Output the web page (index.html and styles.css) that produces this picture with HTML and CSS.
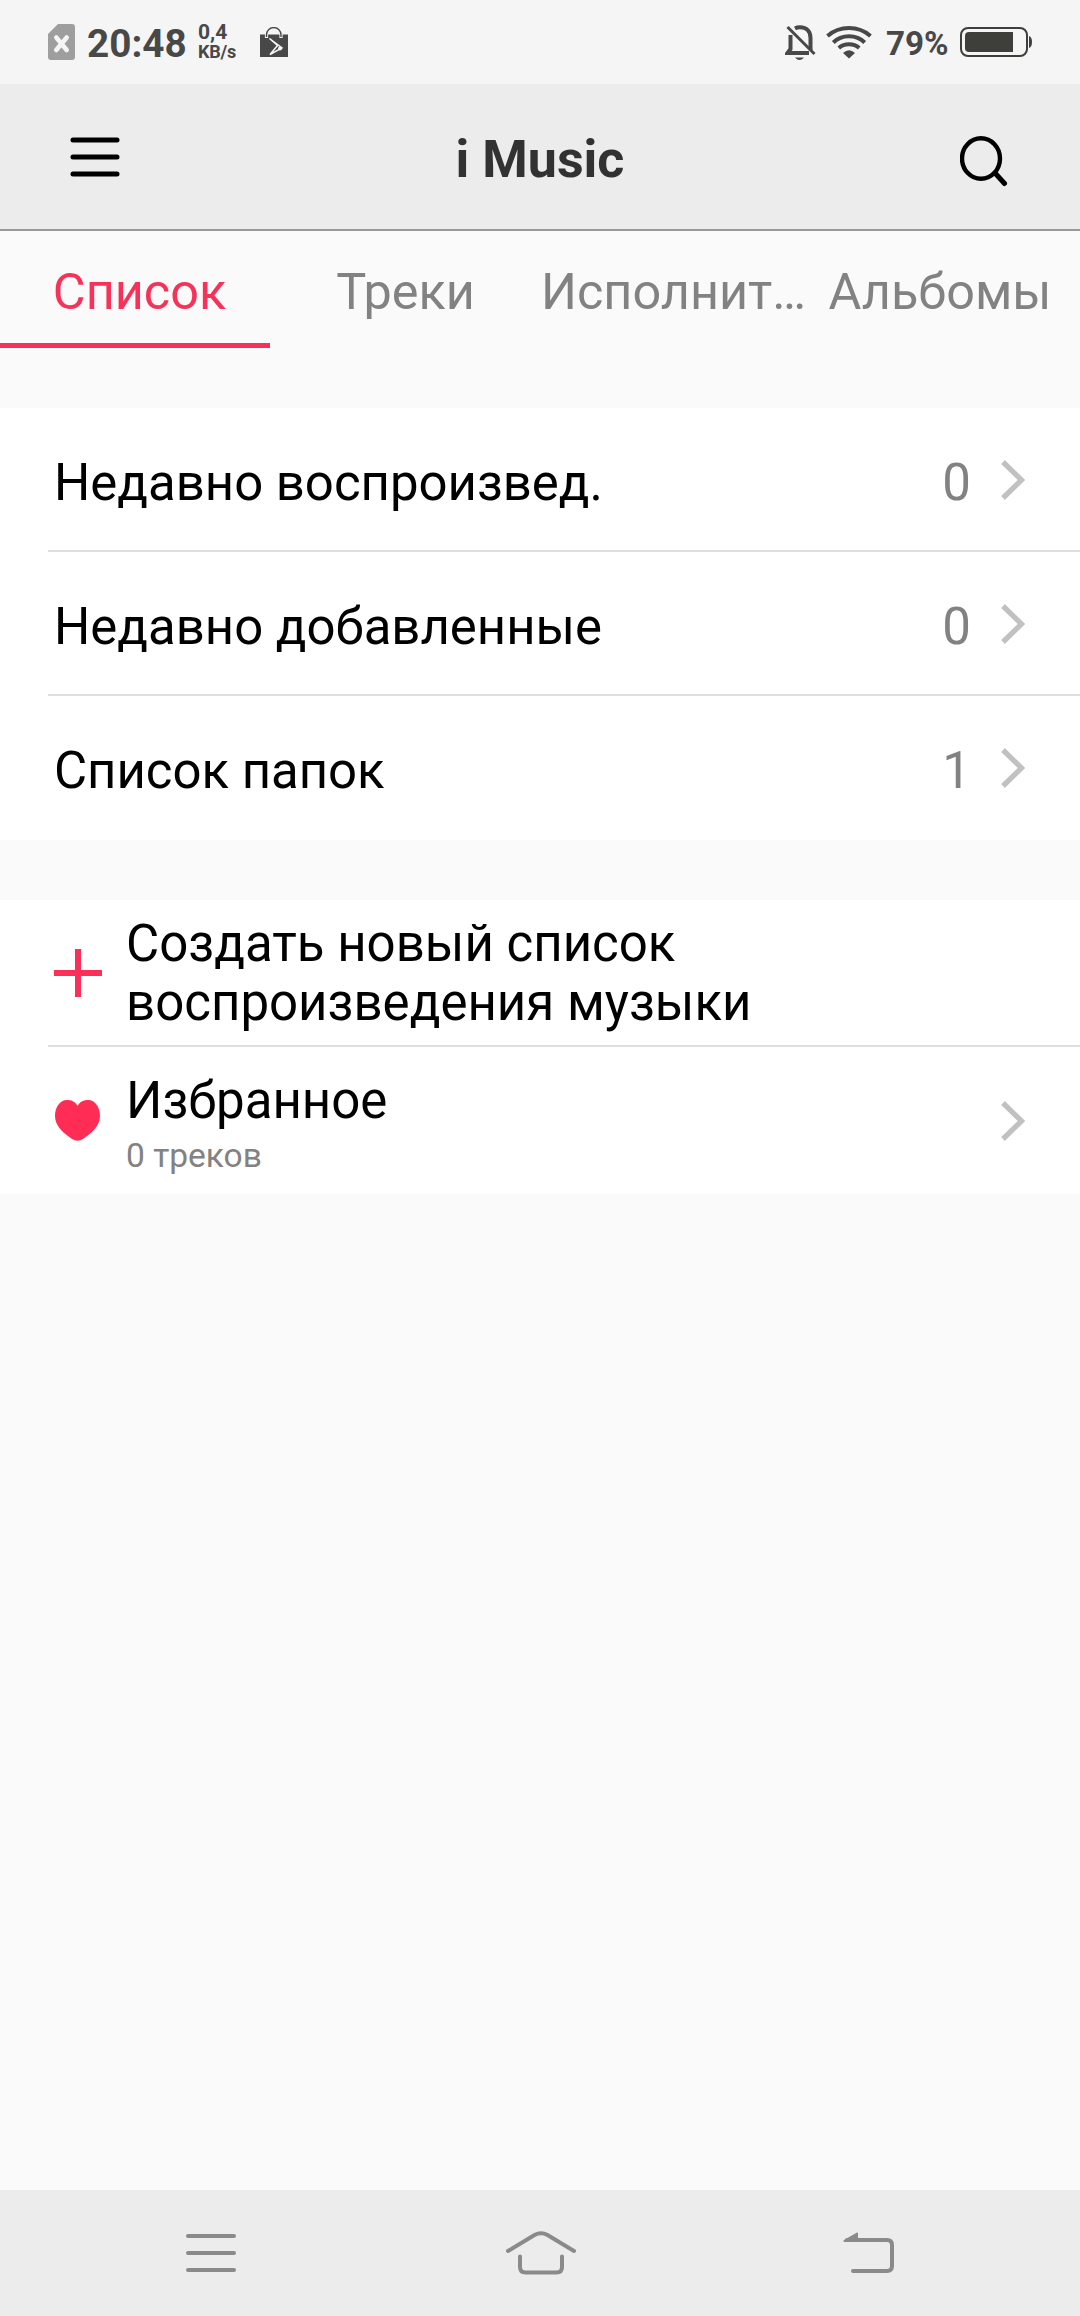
FILE: index.html
```html
<!DOCTYPE html>
<html lang="ru">
<head>
<meta charset="utf-8">
<title>i Music</title>
<link rel="stylesheet" href="styles.css">
</head>
<body>
<div class="screen">
  <div class="status">
    <svg class="sim" width="27" height="36" viewBox="0 0 27 36"><path d="M10 0H24Q27 0 27 3V33Q27 36 24 36H3Q0 36 0 33V10Z" fill="#9e9e9e"/><path d="M8.300 13.500L18.700 26M18.700 13.500L8.300 26" stroke="#f5f5f5" stroke-width="4.600" stroke-linecap="round"/></svg>
    <span class="clock">20:48</span>
    <span class="speed"><span class="rate">0,4</span><span class="unit">KB/s</span></span>
    <svg class="bag" width="28" height="30" viewBox="0 0 28 30"><path d="M0 7.500H28V30H0Z" fill="#484848"/><path d="M6.500 11V8C6.500 -2 21 -2 21 8V11" fill="none" stroke="#f5f5f5" stroke-width="3.200"/><path d="M6.500 10V8C6.500 -1.800 21 -1.800 21 8V10" fill="none" stroke="#484848" stroke-width="1.400"/><path d="M9.500 11.500L22 21L10 27.500L17.500 18.500Z" fill="none" stroke="#f5f5f5" stroke-width="1.500"/><circle cx="20" cy="21.500" r="2" fill="#f5f5f5"/></svg>
    <div class="status-right">
      <svg class="bell" width="31" height="36" viewBox="0 0 31 36"><g fill="none" stroke="#484848" stroke-width="4"><path d="M5.500 10V24L2.500 28H24"/><path d="M10 3.500Q12 2.300 15 2.300C22 2.300 25.500 7 25.500 13V25"/><path d="M2.500 2L29.500 29" stroke-width="3"/></g><path d="M10 32.500H19Q14.500 37.500 10 32.500Z" fill="#484848"/></svg>
      <svg class="wifi" width="46" height="33" viewBox="0 0 46 33"><g fill="none" stroke="#484848" stroke-width="4"><path d="M1.500 10Q10.500 2 23 2T44.500 10"/><path d="M7.300 16.500Q13.500 10.300 23 10.300T38.700 16.500"/><path d="M12.800 22Q17 18.300 23 18.300T33.200 22"/></g><path d="M17 27Q23 21.500 29 27L23 32.500Z" fill="#484848"/></svg>
      <span class="percent">79%</span>
      <svg class="battery" width="73" height="30" viewBox="0 0 73 30"><rect x="1" y="1" width="66" height="28" rx="7" fill="none" stroke="#3e3f3a" stroke-width="2"/><path d="M9 5H53V25H9Q5 25 5 21V9Q5 5 9 5Z" fill="#3e3f3a"/><path d="M69 9Q72 10 72 15T69 21Z" fill="#3e3f3a"/></svg>
    </div>
  </div>
  <div class="header">
    <svg class="menu" width="50" height="40" viewBox="0 0 50 40"><path d="M3 3H47M3 20H47M3 37H47" stroke="#000" stroke-width="5" stroke-linecap="round"/></svg>
    <h1 class="title">i Music</h1>
    <svg class="search" width="48" height="52" viewBox="0 0 48 52"><ellipse cx="21" cy="22.500" rx="19" ry="20.300" fill="none" stroke="#000" stroke-width="4.400"/><path d="M35 37L44.500 47.500" stroke="#000" stroke-width="5" stroke-linecap="round"/></svg>
  </div>
  <div class="tabs">
    <div class="tab active">Список</div>
    <div class="tab">Треки</div>
    <div class="tab tab-wide">Исполнит…</div>
    <div class="tab tab-last">Альбомы</div>
  </div>
  <div class="group">
    <div class="row"><span class="label">Недавно воспроизвед.</span><span class="count">0</span><svg class="chevron" width="24" height="40" viewBox="0 0 24 40"><path d="M2 2L20.500 20L2 38" fill="none" stroke="#c1c1c1" stroke-width="5.300"/></svg></div>
    <div class="row"><span class="label">Недавно добавленные</span><span class="count">0</span><svg class="chevron" width="24" height="40" viewBox="0 0 24 40"><path d="M2 2L20.500 20L2 38" fill="none" stroke="#c1c1c1" stroke-width="5.300"/></svg></div>
    <div class="row"><span class="label">Список папок</span><span class="count">1</span><svg class="chevron" width="24" height="40" viewBox="0 0 24 40"><path d="M2 2L20.500 20L2 38" fill="none" stroke="#c1c1c1" stroke-width="5.300"/></svg></div>
  </div>
  <div class="group playlists">
    <div class="row row-create"><svg class="lead" width="48" height="48" viewBox="0 0 48 48"><path d="M24 0V48M0 24H48" stroke="#fb2f58" stroke-width="6"/></svg><span class="create">Создать новый список<br>воспроизведения музыки</span></div>
    <div class="row row-fav"><svg class="lead" width="48" height="44" viewBox="0 0 48 44"><path d="M23.500 7C26.500 1.500 31 1 34 1C41 1 46 8 46 17C46 28 36 35 29 40Q23.500 43.500 18 40C11 35 1 28 1 17C1 8 6 1 13 1C17 1 21 2 23.500 7Z" fill="#ff2d55"/></svg><span class="fav"><span class="fav-name">Избранное</span><span class="fav-sub">0 треков</span></span><svg class="chevron" width="24" height="40" viewBox="0 0 24 40"><path d="M2 2L20.500 20L2 38" fill="none" stroke="#c1c1c1" stroke-width="5.300"/></svg></div>
  </div>
  <div class="nav">
    <svg width="50" height="38" viewBox="0 0 50 38"><path d="M2 2H48M2 19H48M2 36H48" class="nav-stroke"/></svg>
    <svg class="home" width="70" height="44" viewBox="0 0 70 44"><path d="M2 20L28.500 4Q35 .500 41.500 4L68 20M14 25.500V36Q14 41.500 19.500 41.500H50.500Q56 41.500 56 36V25.500" class="nav-stroke"/></svg>
    <svg width="52" height="42" viewBox="0 0 52 42"><path d="M4 8H44Q49 8 49 13V34Q49 39 44 39H10" class="nav-stroke"/><path d="M1 8L14 .600Q15 .300 15 1.500V10H1.500Q-.500 9.500 1 8Z" fill="#8a8a8a"/></svg>
  </div>
</div>
</body>
</html>
```
FILE: styles.css
```css
* { box-sizing: border-box; }
body { margin: 0; font-family: Roboto, "Noto Sans", sans-serif; background: #fafafa; color: #000; }
svg { display: block; flex: none; }
.screen { width: 1080px; height: 2316px; display: flex; flex-direction: column; overflow: hidden; }
.status { height: 84px; background: #f5f5f5; display: flex; align-items: flex-start; padding: 0 47px 0 48px; color: #484848; font-weight: 700; }
.sim { margin: 24px 12px 0 0; }
.clock { width: 111px; font-size: 38.700px; line-height: 46px; margin-top: 21px; white-space: nowrap; }
.speed { display: flex; flex-direction: column; width: 62px; margin-top: 22px; white-space: nowrap; }
.rate { font-size: 21px; line-height: 21px; }
.unit { font-size: 18px; line-height: 18px; letter-spacing: -0.200px; }
.bag { margin-top: 27px; }
.status-right { display: flex; margin-left: auto; }
.bell { margin-top: 25px; }
.wifi { margin: 26px 0 0 10px; }
.percent { font-size: 33.200px; line-height: 40px; margin: 24px 0 0 14px; width: 74px; white-space: nowrap; }
.battery { margin-top: 27px; }
.header { height: 147px; background: #ececec; border-bottom: 2px solid #999; display: flex; justify-content: space-between; align-items: flex-start; padding: 0 72px 0 70px; }
.menu { margin-top: 52.500px; }
.title { margin: 46px 0 0; font-size: 52px; line-height: 60px; font-weight: 700; color: #323232; }
.search { margin-top: 52px; }
.tabs { height: 177px; display: grid; grid-template-columns: repeat(4, 270px); }
.tab { height: 117px; font-size: 50.400px; line-height: 60px; padding-top: 31px; padding-left: 1px; text-align: center; color: #828282; white-space: nowrap; }
.active { color: #f73158; border-bottom: 5px solid #f73158; padding-left: 9px; }
.tab-wide { text-align: left; }
.tab-last { padding-right: 11px; }
.group { background: #fff; }
.row { height: 144px; display: flex; align-items: center; padding: 0 55px 0 54px; background: linear-gradient(#dfdfdf, #dfdfdf) 48px 100% / 1032px 2px no-repeat; }
.row:last-child { background: none; }
.label { font-size: 50.900px; line-height: 60px; margin-right: auto; padding-top: 5px; white-space: nowrap; }
.count { font-size: 51px; line-height: 60px; padding-top: 5px; margin-right: 30px; color: #828282; }
.playlists { margin-top: 60px; }
.row-create { height: 147px; padding-bottom: 1px; }
.row-fav { height: 147px; }
.lead { margin-right: 24px; }
.create { font-size: 51px; line-height: 59px; white-space: nowrap; }
.fav { display: flex; flex-direction: column; margin-right: auto; padding-top: 5px; }
.fav-name { font-size: 51px; line-height: 60px; }
.fav-sub { font-size: 33.500px; line-height: 40px; padding-top: 5px; color: #828282; }
.nav { margin-top: auto; height: 126px; background: #ececec; display: flex; justify-content: space-between; align-items: center; padding: 0 185px 0 186px; }
.home { margin-left: 2px; }
.nav-stroke { fill: none; stroke: #8a8a8a; stroke-width: 4; stroke-linecap: round; }
```
